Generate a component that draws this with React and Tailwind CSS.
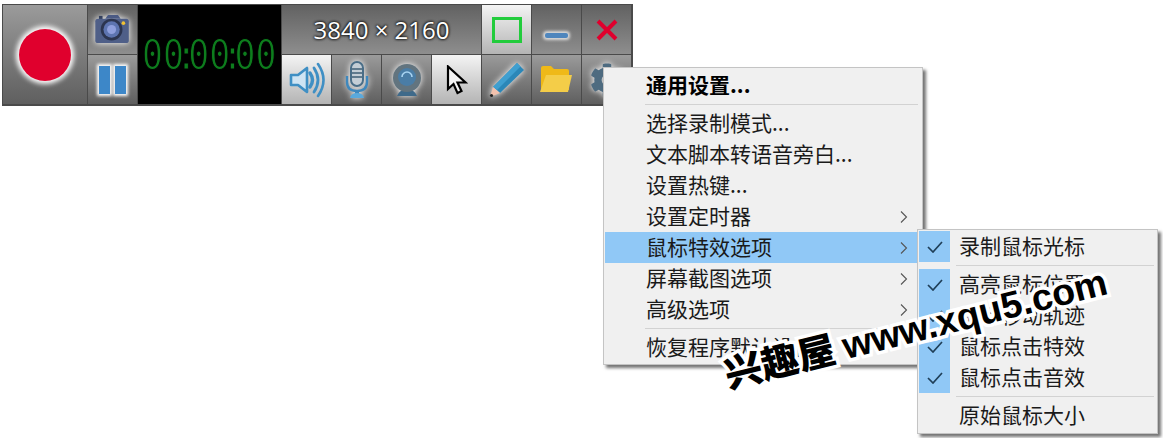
import { FaCog } from "react-icons/fa";

const font = "font-['Noto_Sans_CJK_SC','Microsoft_YaHei',sans-serif]";

const dark = "bg-gradient-to-b from-[#9b9b9b] to-[#5f5f5f]";
const mid = "bg-gradient-to-b from-[#626262] to-[#8e8e8e]";
const light = "bg-gradient-to-b from-[#f4f4f4] to-[#b4b4b4]";
const glow = "[filter:drop-shadow(0_0_3px_#ffffff)]";

function Cell({ bg = dark, className = "", children }) {
  return (
    <div className={`flex items-center justify-center overflow-hidden ${bg} ${className}`}>
      {children}
    </div>
  );
}

function CameraIcon() {
  return (
    <svg width="35" height="29" viewBox="0 0 38 32" className={glow}>
      <rect x="4" y="1" width="4" height="5" fill="#33405e" />
      <path d="M11 4 L14 0 H25 L28 4 Z" fill="#4a5a84" />
      <rect x="0" y="4" width="37" height="27" rx="3" fill="#4f5f88" />
      <circle cx="18" cy="16" r="12" fill="#2c3550" />
      <circle cx="18" cy="16" r="9" fill="#5d74b0" />
      <circle cx="18" cy="16" r="5" fill="#8f9fdd" />
      <circle cx="31" cy="9" r="2" fill="#f2c231" />
    </svg>
  );
}

function SpeakerIcon() {
  return (
    <svg width="36" height="36" viewBox="0 0 36 36">
      <path d="M2 13 H9 L18 6 V30 L9 23 H2 Z" fill="#cfe4f3" stroke="#3f8fc4" strokeWidth="2.6" strokeLinejoin="round" />
      <path d="M21 11 Q26 18 21 25" fill="none" stroke="#3f8fc4" strokeWidth="3.4" strokeLinecap="round" />
      <path d="M25 6 Q33 18 25 30" fill="none" stroke="#3f8fc4" strokeWidth="2.8" strokeLinecap="round" />
      <path d="M29 2 Q40 18 29 34" fill="none" stroke="#3f8fc4" strokeWidth="2.6" strokeLinecap="round" />
    </svg>
  );
}

function MicIcon() {
  return (
    <svg width="24" height="38" viewBox="0 0 24 38" className={glow}>
      <rect x="6" y="1" width="12" height="24" rx="6" fill="#c4ced6" stroke="#4a6e88" strokeWidth="2" />
      <path d="M7 8 H17 M7 12 H17 M7 16 H17" stroke="#3f5f76" strokeWidth="1.5" />
      <path d="M2 15 V21 Q2 30 12 30 Q22 30 22 21 V15" fill="none" stroke="#3f88bd" strokeWidth="2.4" />
      <rect x="10" y="29" width="4" height="4" fill="#3f88bd" />
      <path d="M5 37 Q6 32 12 32 Q18 32 19 37 Z" fill="#5aa9dc" />
    </svg>
  );
}

function WebcamIcon() {
  return (
    <svg width="30" height="34" viewBox="0 0 30 34" className={glow}>
      <path d="M5 33 Q8 26 15 26 Q22 26 25 33 Z" fill="#3f6a8a" />
      <circle cx="15" cy="15" r="14" fill="#62747f" />
      <circle cx="15" cy="14" r="9" fill="#4a7da6" />
      <path d="M10 14 A5 5 0 0 1 20 14" fill="none" stroke="#a9d4f2" strokeWidth="1.6" />
    </svg>
  );
}

function CursorIcon() {
  return (
    <svg width="22" height="30" viewBox="0 0 22 30">
      <path d="M2 1.5 V24 L7.5 19 L11.5 28 L15.5 26 L11.5 17.5 L19.5 17.5 Z" fill="#f4f4f4" stroke="#000000" strokeWidth="2.2" strokeLinejoin="miter" />
    </svg>
  );
}

function PencilIcon() {
  return (
    <svg width="36" height="36" viewBox="0 0 36 36" className={glow}>
      <path d="M28 1 L35 8 L11 31 L4 25 Z" fill="#2b87b8" />
      <path d="M28 1 L31.5 4.5 L8 28 L4 25 Z" fill="#3f9fd0" />
      <path d="M4 25 L11 31 L1 35 Z" fill="#f2c2ae" />
      <circle cx="2.5" cy="33.5" r="1.6" fill="#222222" />
    </svg>
  );
}

function FolderIcon() {
  return (
    <svg width="33" height="27" viewBox="0 0 33 27">
      <path d="M1 2 Q1 0 3 0 H11 L14 3 H27 Q29 3 29 5 V24 H1 Z" fill="#efb918" />
      <path d="M6 9 H32 L28 26 H0 Z" fill="#f4cd48" />
    </svg>
  );
}

function Chevron() {
  return (
    <svg width="8" height="14" viewBox="0 0 8 14" className="absolute right-[13px] top-1/2 -translate-y-1/2">
      <path d="M1 1.5 L6.5 7 L1 12.5" fill="none" stroke="#555555" strokeWidth="1.1" />
    </svg>
  );
}

function Check() {
  return (
    <svg width="16" height="12" viewBox="0 0 16 12">
      <path d="M1 6 L6 11 L15 1" fill="none" stroke="#1f3f58" strokeWidth="1.7" />
    </svg>
  );
}

function Sep({ indent = "ml-[40px]" }) {
  return <div className={`h-px bg-[#d2d2d2] mr-[3px] ${indent}`} />;
}

function MainItem({ label, arrow, active, bold }) {
  return (
    <div
      className={`relative h-[31px] leading-[28px] pl-[41px] text-[21px] whitespace-nowrap text-[#1a1a1a] ${
        active ? "bg-[#90c8f6]" : ""
      } ${bold ? "font-bold text-black" : ""}`}
    >
      {label}
      {arrow && <Chevron />}
    </div>
  );
}

function SubItem({ label, checked }) {
  return (
    <div className="flex h-[31px] items-start">
      <div className={`flex h-full w-[31px] items-center justify-center ${checked ? "bg-[#90c8f6]" : ""}`}>
        {checked && <Check />}
      </div>
      <div className="ml-[9px] text-[21px] leading-[29px] whitespace-nowrap text-[#1a1a1a]">{label}</div>
    </div>
  );
}

export default function App() {
  return (
    <div className={`relative h-[438px] w-[1163px] overflow-hidden bg-white ${font}`}>
      {/* TOOLBAR */}
      <div className="ml-[2px] mt-[4px] grid w-[631px] grid-cols-[84px_49px_143px_repeat(7,49px)] grid-rows-[49px_49px] gap-px border-x border-t border-b-2 border-[#4a4a4a] bg-[#4a4a4a]">
        <Cell className="row-span-2">
          <div className="h-[52px] w-[52px] rounded-full bg-[#e0002d] shadow-[0_0_5px_3px_#ffffff]" />
        </Cell>
        <Cell bg={mid}>
          <CameraIcon />
        </Cell>
        <div className="row-span-2 flex items-center justify-center overflow-hidden bg-black">
          <div className="flex scale-x-[.87] font-['DejaVu_Sans_Mono',monospace] text-[40px] leading-none text-[#0d7d1d] [-webkit-text-stroke:1px_#000000]">
            <span>00</span>
            <span className="flex w-[5px] justify-center">:</span>
            <span>00</span>
            <span className="flex w-[5px] justify-center">:</span>
            <span>00</span>
          </div>
        </div>
        <Cell bg={mid} className="col-span-4">
          <span className="font-['Open_Sans',sans-serif] text-[24px] text-white [text-shadow:0_0_3px_#000000,0_0_3px_#000000]">
            3840 × 2160
          </span>
        </Cell>
        <Cell bg={light}>
          <div className="h-[26px] w-[30px] border-[3px] border-[#22cc3c]" />
        </Cell>
        <Cell bg={mid}>
          <div className="mt-[12px] h-[5px] w-[23px] rounded-[2px] bg-[#4f86bd] shadow-[0_0_3px_2px_#dddddd]" />
        </Cell>
        <Cell bg={mid}>
          <svg width="22" height="22" viewBox="0 0 22 22">
            <path d="M2 2 L20 20 M20 2 L2 20" stroke="#e0002d" strokeWidth="4" />
          </svg>
        </Cell>

        <Cell>
          <div className="flex gap-[5px]">
            <div className="h-[28px] w-[11px] bg-[#3d87c8] shadow-[0_0_3px_2px_#ffffff]" />
            <div className="h-[28px] w-[11px] bg-[#3d87c8] shadow-[0_0_3px_2px_#ffffff]" />
          </div>
        </Cell>
        <Cell bg={light}>
          <SpeakerIcon />
        </Cell>
        <Cell>
          <MicIcon />
        </Cell>
        <Cell>
          <WebcamIcon />
        </Cell>
        <Cell bg={light}>
          <CursorIcon />
        </Cell>
        <Cell>
          <PencilIcon />
        </Cell>
        <Cell>
          <FolderIcon />
        </Cell>
        <Cell>
          <FaCog className={`text-[34px] text-[#4e6b80] ${glow}`} />
        </Cell>
      </div>

      {/* MENU */}
      <div className="absolute left-[603px] top-[67px] h-[298px] w-[320px] border border-[#c4c4c4] bg-[#f0f0f0] px-px shadow-[3px_3px_3px_rgba(0,0,0,.55)]">
        <div className="pt-[2px]">
          <MainItem label="通用设置..." bold />
          <div className="my-[3px]">
            <Sep />
          </div>
          <MainItem label="选择录制模式..." />
          <MainItem label="文本脚本转语音旁白..." />
          <MainItem label="设置热键..." />
          <MainItem label="设置定时器" arrow />
          <MainItem label="鼠标特效选项" arrow active />
          <MainItem label="屏幕截图选项" arrow />
          <MainItem label="高级选项" arrow />
          <div className="my-[3px]">
            <Sep />
          </div>
          <MainItem label="恢复程序默认设置" />
        </div>
      </div>

      {/* SUBMENU */}
      <div className="absolute left-[917px] top-[229px] h-[205px] w-[241px] border border-[#c4c4c4] bg-[#f0f0f0] pl-[1px] pt-[1px] shadow-[3px_3px_3px_rgba(0,0,0,.55)]">
        <SubItem label="录制鼠标光标" checked />
        <div className="my-[3px]">
          <Sep indent="ml-[37px]" />
        </div>
        <SubItem label="高亮鼠标位置" checked />
        <SubItem label="鼠标移动轨迹" checked />
        <SubItem label="鼠标点击特效" checked />
        <SubItem label="鼠标点击音效" checked />
        <div className="my-[3px]">
          <Sep indent="ml-[37px]" />
        </div>
        <SubItem label="原始鼠标大小" />
      </div>

      {/* WATERMARK */}
      <div className="absolute left-[725px] top-[354px] origin-left -rotate-[14deg] whitespace-nowrap font-['Noto_Sans_CJK_SC',sans-serif] text-[37.5px] leading-none font-black text-black [-webkit-text-stroke:7px_#ffffff] [paint-order:stroke_fill]">
        兴趣屋 <span className="font-['Liberation_Sans',sans-serif] font-bold">www.xqu5.com</span>
      </div>
    </div>
  );
}
